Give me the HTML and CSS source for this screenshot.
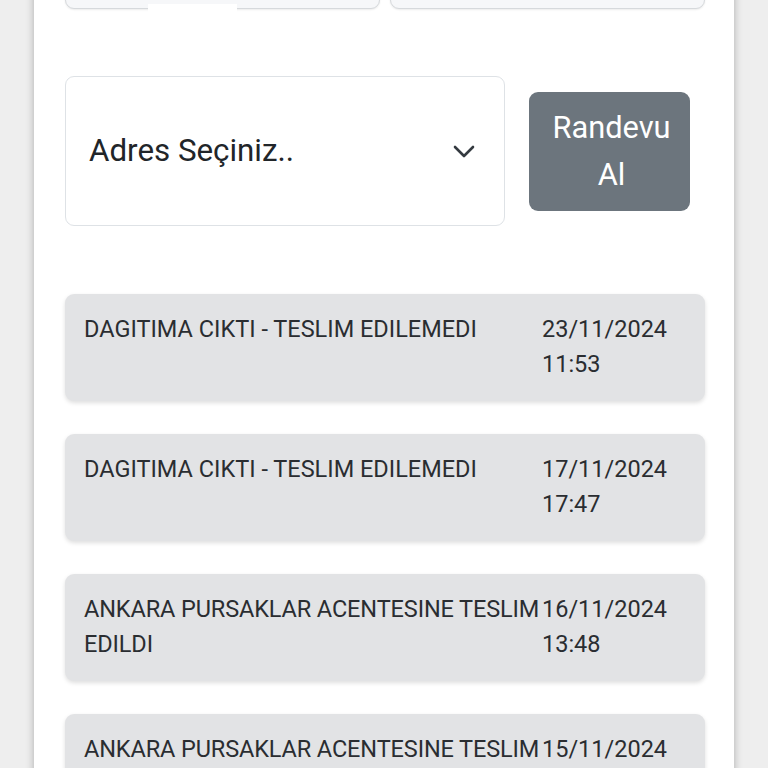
FILE: index.html
```html
<!DOCTYPE html>
<html lang="tr">
<head>
<meta charset="utf-8">
<title>Kargo Takip</title>
<link rel="stylesheet" href="styles.css">
</head>
<body>
<div class="panel">
  <div class="top-row">
    <div class="top-box top-box-left"><span class="mask"></span></div>
    <div class="top-box"></div>
  </div>

  <div class="form-row">
    <div class="select">
      <span class="select-text">Adres Seçiniz..</span>
      <svg class="chevron" width="22" height="13" viewBox="0 0 22 13" aria-hidden="true">
        <path d="M2 2 L11 11 L20 2" fill="none" stroke="#343a40" stroke-width="2.6" stroke-linecap="round" stroke-linejoin="round"/>
      </svg>
    </div>
    <button class="btn">Randevu<br>Al</button>
  </div>

  <div class="list">
    <div class="card">
      <div class="desc">DAGITIMA CIKTI - TESLIM EDILEMEDI</div>
      <div class="date">23/11/2024<br>11:53</div>
    </div>
    <div class="card">
      <div class="desc">DAGITIMA CIKTI - TESLIM EDILEMEDI</div>
      <div class="date">17/11/2024<br>17:47</div>
    </div>
    <div class="card">
      <div class="desc desc-long">ANKARA PURSAKLAR ACENTESINE TESLIM EDILDI</div>
      <div class="date">16/11/2024<br>13:48</div>
    </div>
    <div class="card">
      <div class="desc desc-long">ANKARA PURSAKLAR ACENTESINE TESLIM EDILDI</div>
      <div class="date">15/11/2024<br>09:12</div>
    </div>
  </div>
</div>
</body>
</html>
```

FILE: styles.css
```css
html, body {
  margin: 0;
  padding: 0;
  background: #eeeeee;
  height: 768px;
  overflow: hidden;
}

body {
  font-family: Roboto, "Noto Sans", "Liberation Sans", sans-serif;
  color: #212529;
}

.panel {
  width: 700px;
  margin: 0 auto;
  min-height: 768px;
  background: #ffffff;
  box-shadow: 0 0 8px rgba(0, 0, 0, 0.28);
  padding: 0 29px 0 31px;
  box-sizing: border-box;
}

.top-row {
  display: grid;
  grid-template-columns: 315px 315px;
  gap: 10px;
  margin-top: -41px;
}

.top-box {
  height: 48px;
  background: #f6f7f9;
  border: 1px solid #d6d9dc;
  border-radius: 9px;
  box-shadow: 0 1px 2px rgba(0, 0, 0, 0.08);
  position: relative;
}

.top-box-left .mask {
  position: absolute;
  left: 82px;
  width: 89px;
  bottom: -4px;
  height: 8px;
  background: #ffffff;
}

.form-row {
  display: flex;
  align-items: center;
  gap: 24px;
  margin-top: 67px;
}

.select {
  width: 440px;
  height: 150px;
  box-sizing: border-box;
  border: 1px solid #dee2e6;
  border-radius: 9px;
  display: flex;
  align-items: center;
  justify-content: space-between;
  padding: 0 29px 0 23px;
}

.select-text {
  font-size: 31.3px;
  line-height: 1.5;
  color: #212529;
}

.chevron {
  display: block;
}

.btn {
  width: 161px;
  height: 119px;
  background: #6c757d;
  color: #ffffff;
  border: none;
  border-radius: 9px;
  font-family: Roboto, "Noto Sans", "Liberation Sans", sans-serif;
  font-size: 30.8px;
  line-height: 47px;
  padding: 0 0 0 4px;
  text-align: center;
}

.list {
  display: flex;
  flex-direction: column;
  gap: 33px;
  margin-top: 68px;
}

.card {
  display: grid;
  grid-template-columns: 458px 1fr;
  background: #e2e3e5;
  border-radius: 9px;
  box-shadow: 0 2px 4px rgba(0, 0, 0, 0.13);
  padding: 18px 19px;
  min-height: 107px;
  box-sizing: border-box;
  font-size: 23.5px;
  line-height: 35px;
  color: #2a2d31;
}

.desc-long {
  letter-spacing: -0.12px;
}
```
